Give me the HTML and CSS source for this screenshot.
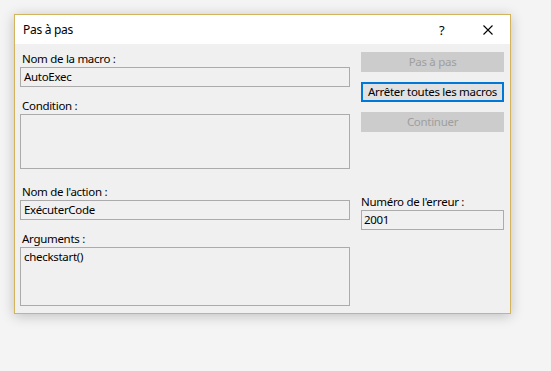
FILE: index.html
```html
<!DOCTYPE html>
<html lang="fr">
<head>
<meta charset="utf-8">
<title>Pas à pas</title>
<link rel="stylesheet" href="styles.css">
</head>
<body>
<div class="dialog">
  <div class="titlebar">
    <span class="title">Pas à pas</span>
    <span class="help">?</span>
    <svg class="close" width="10" height="10" viewBox="0 0 10 10"><path d="M0.5 0.5 L9.5 9.5 M9.5 0.5 L0.5 9.5" stroke="#000" stroke-width="1.1" fill="none"/></svg>
  </div>
  <div class="content">
    <div class="col-left">
      <div class="label l1">Nom de la macro :</div>
      <div class="field f1">AutoExec</div>
      <div class="label l2">Condition :</div>
      <div class="field area cond"></div>
      <div class="label l3">Nom de l'action :</div>
      <div class="field f3">ExécuterCode</div>
      <div class="label l4">Arguments :</div>
      <div class="field area args">checkstart()</div>
    </div>
    <div class="col-right">
      <div class="btn disabled">Pas à pas</div>
      <div class="btn default">Arrêter toutes les macros</div>
      <div class="btn disabled">Continuer</div>
      <div class="label err">Numéro de l'erreur :</div>
      <div class="field ferr">2001</div>
    </div>
  </div>
</div>
</body>
</html>
```
FILE: styles.css
```css
html, body {
  margin: 0;
  padding: 0;
}
body {
  background: #f4f4f4;
  width: 551px;
  height: 371px;
  overflow: hidden;
  font-family: "Noto Sans", "Liberation Sans", sans-serif;
  font-size: 11.5px;
  letter-spacing: -0.3px;
  color: #000;
}
.dialog {
  margin: 14px 0 0 14px;
  width: 497px;
  height: 300px;
  box-sizing: border-box;
  border: 1px solid #d2b35e;
  background: #f0f0f0;
  box-shadow: 0 2px 12px rgba(0,0,0,0.22);
  display: flex;
  flex-direction: column;
}
.titlebar {
  height: 29px;
  background: #fff;
  display: flex;
  align-items: center;
  padding-left: 8px;
  flex: none;
}
.title {
  flex: 1;
  line-height: 16px;
  font-size: 12px;
}
.help {
  font-size: 13px;
  width: 10px;
  margin-right: 34px;
  line-height: 16px;
}
.close {
  margin-right: 17px;
  display: block;
}
.content {
  flex: 1;
  display: flex;
  gap: 11px;
  padding: 0 6px 0 5px;
}
.col-left {
  width: 330px;
  display: flex;
  flex-direction: column;
}
.col-right {
  width: 143px;
  display: flex;
  flex-direction: column;
  padding-top: 8px;
}
.label {
  height: 17px;
  line-height: 17px;
  padding-left: 2px;
  white-space: nowrap;
}
.l1 { margin-top: 6px; }
.l2 { margin-top: 10px; }
.l3 { margin-top: 14px; }
.l4 { margin-top: 10px; }
.field {
  box-sizing: border-box;
  height: 20px;
  border: 1px solid #ababab;
  background: #f0f0f0;
  padding: 0 3px;
  line-height: 18px;
  white-space: nowrap;
}
.area {
  line-height: 16px;
  padding-top: 1px;
}
.cond { height: 55px; }
.args { height: 59px; }
.btn {
  box-sizing: border-box;
  height: 20px;
  line-height: 18px;
  text-align: center;
  border: 1px solid #cccccc;
  background: #cccccc;
  color: #9e9e9e;
  margin-bottom: 10px;
  white-space: nowrap;
}
.btn.default {
  border: 2px solid #0078d7;
  line-height: 16px;
  background: #e1e1e1;
  color: #000;
}
.err {
  margin-top: 51px;
  padding-left: 0;
}
.ferr {
  padding-left: 2px;
}
```
